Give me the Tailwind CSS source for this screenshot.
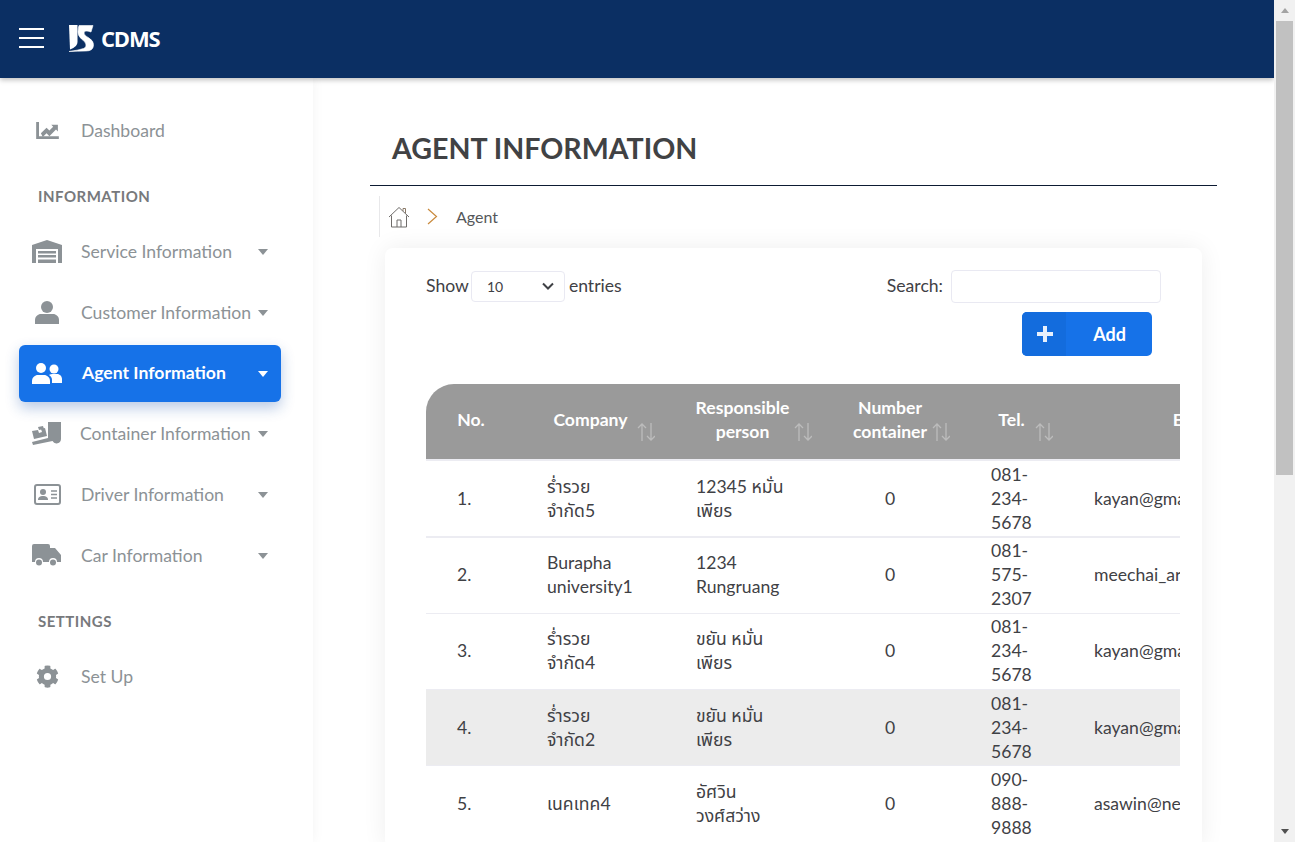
<!DOCTYPE html>
<html lang="en">
<head>
<meta charset="utf-8">
<title>CDMS</title>
<script src="https://cdn.jsdelivr.net/npm/@tailwindcss/browser@4"></script>
</head>
<body class="h-[842px] w-[1295px] overflow-hidden bg-white font-['Lato','Noto_Sans_Thai','Noto_Sans','DejaVu_Sans',sans-serif] text-[17.6px] text-[#3f4145]">
<div class="flex h-[842px]">
  <div class="flex h-[842px] w-[1274px] flex-col overflow-hidden">
    <header class="z-20 flex h-[78px] shrink-0 items-center bg-[#0b2f63] pl-[19px] shadow-[0_2px_5px_rgba(0,0,0,0.25)]">
      <div class="mb-[2px] flex w-[25px] flex-col gap-[7px]">
        <span class="h-[2px] bg-white"></span><span class="h-[2px] bg-white"></span><span class="h-[2px] bg-white"></span>
      </div>
      <svg class="mb-[2px] ml-[25px]" width="25" height="28" viewBox="0 0 25 28" fill="#fff"><path d="M0 1 H8.500 V18 Q8.500 23 1 25.500 Z"/><path d="M10 1.500 H24 L22 8 Q15 5.500 15 9 Q15 11.500 20 14 Q25 17 24.500 21.500 Q24 27 17 27 Q9 27 0 27.500 Q10 26 12.500 25 Q17 24.500 17 21 Q17 18 12.500 15 Q9 12 9 8 Q9 4 10 1.500Z" stroke="#fff" stroke-width="0.600"/></svg>
      <span class="mb-[2px] ml-[7px] font-['Open_Sans'] text-[22px] font-bold tracking-[-1.2px] text-white">CDMS</span>
    </header>
    <div class="flex min-h-0 flex-1">
      <aside class="z-10 flex w-[313px] shrink-0 flex-col bg-white text-[#8c9296] shadow-[0_0_12px_rgba(0,0,0,0.05)]">
        <a class="mt-[25px] flex h-[54px] items-center pl-[36px]">
          <svg width="23" height="17" viewBox="0 0 24 18" fill="#8c9296"><path d="M0 0h3v15h21v3H0z"/><path d="M5 12l6-6 3 3 4-4-2-2h7v7l-2-2-7 7-3-3-4 4z"/></svg>
          <span class="ml-[22px] pt-[2px]">Dashboard</span>
        </a>
        <div class="mt-[28px] h-[24px] pl-[38px] text-[15px] font-bold leading-[23px] tracking-[0.5px] text-[#77797c]">INFORMATION</div>
        <a class="mt-[14px] flex h-[57px] items-center pl-[32px]">
          <svg width="30" height="23" viewBox="0 0 30 23" fill="#8c9296"><path d="M0 5 15 0l15 5v18h-4V9H4v14H0z"/><path d="M6 11h18v2.500H6zM6 15h18v2.500H6zM6 19.500h18V23H6z"/></svg>
          <span class="ml-[19px] pt-[2px]">Service Information</span>
          <span class="ml-auto mr-[45px] h-0 w-0 border-x-[5.500px] border-t-[6px] border-x-transparent border-t-[#8c9296]"></span>
        </a>
        <a class="mt-[4px] flex h-[57px] items-center pl-[35px]">
          <svg width="24" height="23" viewBox="0 0 24 23" fill="#8c9296"><circle cx="12" cy="6" r="6"/><path d="M0 23v-4c0-3.500 3-6 6-6h12c3 0 6 2.500 6 6v4z"/></svg>
          <span class="ml-[22px] pt-[2px]">Customer Information</span>
          <span class="ml-auto mr-[45px] h-0 w-0 border-x-[5.500px] border-t-[6px] border-x-transparent border-t-[#8c9296]"></span>
        </a>
        <a class="ml-[19px] mt-[4px] flex h-[57px] w-[262px] items-center rounded-[6px] bg-[#1672e8] pl-[13px] font-bold text-white shadow-[0_6px_14px_rgba(22,80,170,0.3)]">
          <svg width="30" height="21" viewBox="0 0 30 21" fill="#fff"><circle cx="9" cy="5" r="5"/><circle cx="22" cy="6" r="4.500"/><path d="M0 21v-3c0-3.500 3-6 6-6h6c3 0 6 2.500 6 6v3z"/><path d="M17 12c1-1 3-1 4-1h4c3 0 5 2.500 5 5v4H20v-3c0-2-1-4-3-5z"/></svg>
          <span class="ml-[20px]">Agent Information</span>
          <span class="ml-auto mr-[13px] h-0 w-0 border-x-[5.500px] border-t-[6px] border-x-transparent border-t-white"></span>
        </a>
        <a class="mt-[3px] flex h-[57px] items-center pl-[32px]">
          <svg width="30" height="23" viewBox="0 0 30 23" fill="#8c9296"><path d="M16 0h13v17a4.500 4.500 0 0 1-8.500 2L1 23l-1-3 16-4z"/><path d="M0 9l6-1 1 3 3-1-1-3 4-1 2 8-13 3z"/><path d="M6 5l5-1 1 3-5 1z"/></svg>
          <span class="ml-[18px] pt-[2px]">Container Information</span>
          <span class="ml-auto mr-[45px] h-0 w-0 border-x-[5.500px] border-t-[6px] border-x-transparent border-t-[#8c9296]"></span>
        </a>
        <a class="mt-[4px] flex h-[57px] items-center pl-[34px]">
          <svg width="27" height="21" viewBox="0 0 27 21"><rect x="1" y="1" width="25" height="19" rx="2" fill="none" stroke="#8c9296" stroke-width="2"/><circle cx="9" cy="8" r="3" fill="#8c9296"/><path d="M4 16c0-3 2-4 5-4s5 1 5 4z" fill="#8c9296"/><path d="M17 7h6M17 10.500h6M17 14h6" stroke="#8c9296" stroke-width="1.500"/></svg>
          <span class="ml-[20px] pt-[2px]">Driver Information</span>
          <span class="ml-auto mr-[45px] h-0 w-0 border-x-[5.500px] border-t-[6px] border-x-transparent border-t-[#8c9296]"></span>
        </a>
        <a class="mt-[4px] flex h-[57px] items-center pl-[32px]">
          <svg width="30" height="23" viewBox="0 0 30 23" fill="#8c9296"><path d="M2 0h14a2 2 0 0 1 2 2v2h5l6 7v7h-4a4 4 0 0 0-8 0h-6a4 4 0 0 0-8 0H0V2a2 2 0 0 1 2-2z"/><circle cx="7" cy="18.500" r="3"/><circle cx="21" cy="18.500" r="3"/></svg>
          <span class="ml-[19px] pt-[2px]">Car Information</span>
          <span class="ml-auto mr-[45px] h-0 w-0 border-x-[5.500px] border-t-[6px] border-x-transparent border-t-[#8c9296]"></span>
        </a>
        <div class="mt-[25px] h-[24px] pl-[38px] text-[15px] font-bold leading-[24px] tracking-[0.5px] text-[#77797c]">SETTINGS</div>
        <a class="mt-[15px] flex h-[57px] items-center pl-[36px]">
          <svg width="23" height="23" viewBox="0 0 512 512" fill="#8c9296"><path d="M487 316l-42-25a191 191 0 0 0 0-70l42-25c5-3 7-9 5-14a248 248 0 0 0-54-94c-4-4-10-5-15-2l-42 25a188 188 0 0 0-61-35V27c0-6-4-11-9-12a250 250 0 0 0-110 0c-5 1-9 6-9 12v49a194 194 0 0 0-61 35L89 87c-5-3-11-2-15 2a246 246 0 0 0-54 94c-2 5 0 11 5 14l42 25a191 191 0 0 0 0 70l-42 25c-5 3-7 9-5 14 11 35 30 67 54 94 4 4 10 5 15 2l42-25a188 188 0 0 0 61 35v49c0 6 4 11 9 12a250 250 0 0 0 110 0c5-1 9-6 9-12v-49a194 194 0 0 0 61-35l42 25c5 3 11 2 15-2a246 246 0 0 0 54-94c2-5 0-11-5-14zM256 336a80 80 0 1 1 0-160 80 80 0 0 1 0 160z"/></svg>
          <span class="ml-[22px] pt-[2px]">Set Up</span>
        </a>
      </aside>
      <main class="min-w-0 flex-1 overflow-hidden">
        <div class="ml-[57px] mr-[57px]">
          <h1 class="mt-[50px] h-[58px] border-b border-[#0d1b33] pl-[22px] text-[28.600px] font-bold leading-[40px] text-[#414244]">AGENT INFORMATION</h1>
          <nav class="ml-[9px] mt-[10px] flex h-[41px] items-center border-l border-[#e8e8ea] pl-[8px] text-[16px] text-[#55575a]">
            <svg width="22" height="22" viewBox="0 0 22 22" fill="none" stroke="#6f6c6a" stroke-width="1"><path d="M1 11 11 1.500l10 9.500"/><path d="M3.500 9.500V21h15V9.500"/><path d="M9 21v-7h4v7"/><path d="M15 5V2.500h2.500V7" stroke="#8a7a68"/></svg>
            <svg class="ml-[17px]" width="11" height="17" viewBox="0 0 11 17" fill="none" stroke="#c98a3d" stroke-width="1.200"><path d="M1 1l8.500 7.500L1 16"/></svg>
            <span class="ml-[18px]">Agent</span>
          </nav>
        </div>
        <section class="ml-[72px] mt-[11px] h-[600px] w-[817px] rounded-[8px] bg-white pl-[41px] pr-[22px] shadow-[0_0_25px_rgba(0,0,0,0.07)]">
          <div class="flex h-[64px] justify-between pr-[19px] pt-[22px]">
            <div class="flex h-[32px] items-center">
              <span>Show</span>
              <div class="ml-[2px] flex h-[31px] w-[94px] items-center justify-between rounded-[4px] border border-[#e9e9f2] pl-[15px] pr-[10px] text-[14px]">
                <span>10</span>
                <svg width="12" height="8" viewBox="0 0 12 8" fill="none" stroke="#3f4145" stroke-width="2"><path d="M1 1.500l5 5 5-5"/></svg>
              </div>
              <span class="ml-[4px]">entries</span>
            </div>
            <div class="flex h-[33px] items-center">
              <span>Search:</span>
              <div class="ml-[8px] h-[33px] w-[210px] rounded-[4px] border border-[#e9e9f2]"></div>
            </div>
          </div>
          <div class="flex justify-end pr-[28px]">
            <button class="flex h-[44px] w-[130px] overflow-hidden rounded-[5px] bg-[#1672e8] font-bold text-white">
              <span class="flex h-full w-[44px] items-center justify-center bg-[#136cdd] pl-[1px]">
                <svg width="16" height="16" viewBox="0 0 16 16" fill="#e8f0fc"><path d="M6 0h4v6h6v4h-6v6H6v-6H0V6h6z"/></svg>
              </span>
              <span class="flex h-full flex-1 items-center justify-center pl-[1px] text-[18px]">Add</span>
            </button>
          </div>
          <div class="mt-[28px] w-[754px] overflow-hidden">
            <table class="w-[899px] table-fixed border-collapse">
              <colgroup>
                <col class="w-[90px]"><col class="w-[149px]"><col class="w-[155px]"><col class="w-[140px]"><col class="w-[103px]"><col class="w-[262px]">
              </colgroup>
              <thead>
                <tr class="h-[76px] bg-[#9a9a9a] text-center font-bold leading-[24px] text-white">
                  <th class="rounded-tl-[28px] px-[20px] pb-[4px]">No.</th>
                  <th class="relative px-[20px] pb-[4px]">Company
                    <svg class="absolute bottom-[17px] right-[10px]" width="18" height="20" viewBox="0 0 18 20" fill="none" stroke="#bcbcbc" stroke-width="1.300"><path d="M5 19V2M1 6l4-4 4 4"/><path d="M14 1v17M10 14l4 4 4-4"/></svg>
                  </th>
                  <th class="relative px-[20px] pb-[4px]">Responsible<br>person
                    <svg class="absolute bottom-[17px] right-[8px]" width="18" height="20" viewBox="0 0 18 20" fill="none" stroke="#bcbcbc" stroke-width="1.300"><path d="M5 19V2M1 6l4-4 4 4"/><path d="M14 1v17M10 14l4 4 4-4"/></svg>
                  </th>
                  <th class="relative px-[20px] pb-[4px]">Number<br>container
                    <svg class="absolute bottom-[17px] right-[10px]" width="18" height="20" viewBox="0 0 18 20" fill="none" stroke="#bcbcbc" stroke-width="1.300"><path d="M5 19V2M1 6l4-4 4 4"/><path d="M14 1v17M10 14l4 4 4-4"/></svg>
                  </th>
                  <th class="relative px-[20px] pb-[4px]">Tel.
                    <svg class="absolute bottom-[17px] right-[10px]" width="18" height="20" viewBox="0 0 18 20" fill="none" stroke="#bcbcbc" stroke-width="1.300"><path d="M5 19V2M1 6l4-4 4 4"/><path d="M14 1v17M10 14l4 4 4-4"/></svg>
                  </th>
                  <th class="pb-[4px] text-center">Email</th>
                </tr>
              </thead>
              <tbody class="leading-[24px]">
                <tr class="h-[77px] border-t-2 border-[#ececf2] [&>td]:pt-[1px]"><td class="pl-[31px]">1.</td><td class="pl-[31px]">ร่ำรวย<br>จำกัด5</td><td class="pl-[31px]">12345 หมั่น<br>เพียร</td><td class="text-center">0</td><td class="pl-[31px]">081-<br>234-<br>5678</td><td class="pl-[31px]">kayan@gmail.com</td></tr>
                <tr class="h-[76px] border-t-2 border-[#ececf2]"><td class="pl-[31px]">2.</td><td class="pl-[31px]">Burapha<br>university1</td><td class="pl-[31px]">1234<br>Rungruang</td><td class="text-center">0</td><td class="pl-[31px]">081-<br>575-<br>2307</td><td class="pl-[31px]">meechai_ar@gmail.com</td></tr>
                <tr class="h-[76px] border-t border-[#ececf2]"><td class="pl-[31px]">3.</td><td class="pl-[31px]">ร่ำรวย<br>จำกัด4</td><td class="pl-[31px]">ขยัน หมั่น<br>เพียร</td><td class="text-center">0</td><td class="pl-[31px]">081-<br>234-<br>5678</td><td class="pl-[31px]">kayan@gmail.com</td></tr>
                <tr class="h-[76px] border-t border-[#ececf2] bg-[#ececec] [&>td]:pt-[1px]"><td class="pl-[31px]">4.</td><td class="pl-[31px]">ร่ำรวย<br>จำกัด2</td><td class="pl-[31px]">ขยัน หมั่น<br>เพียร</td><td class="text-center">0</td><td class="pl-[31px]">081-<br>234-<br>5678</td><td class="pl-[31px]">kayan@gmail.com</td></tr>
                <tr class="h-[77px] border-y border-[#ececf2] [&>td]:pt-[1px]"><td class="pl-[31px]">5.</td><td class="pl-[31px]">เนคเทค4</td><td class="pl-[31px]">อัศวิน<br>วงศ์สว่าง</td><td class="text-center">0</td><td class="pl-[31px]">090-<br>888-<br>9888</td><td class="pl-[31px]">asawin@nectec.or.th</td></tr>
              </tbody>
            </table>
          </div>
        </section>
      </main>
    </div>
  </div>
  <div class="flex h-[842px] w-[21px] flex-col items-center bg-[#f1f1f1]">
    <div class="flex h-[21px] w-full items-center justify-center"><span class="h-0 w-0 border-x-[4.500px] border-b-[5px] border-x-transparent border-b-[#a3a3a3]"></span></div>
    <div class="h-[454px] w-[17px] bg-[#c1c1c1]"></div>
    <div class="flex-1"></div>
    <div class="flex h-[21px] w-full items-center justify-center"><span class="h-0 w-0 border-x-[4.500px] border-t-[5px] border-x-transparent border-t-[#505050]"></span></div>
  </div>
</div>
</body>
</html>
